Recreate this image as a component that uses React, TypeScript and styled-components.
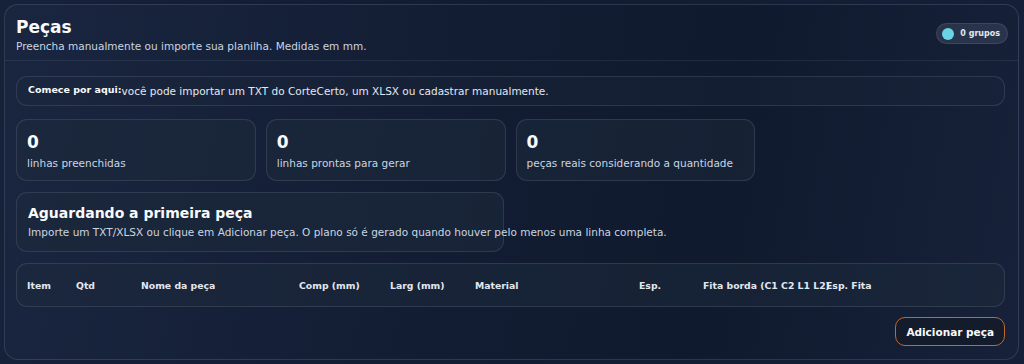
import React from "react";
import styled, { createGlobalStyle } from "styled-components";

const GlobalStyle = createGlobalStyle`
	html, body {
		margin: 0;
		padding: 0;
		background: #111a2e;
		font-family: "DejaVu Sans", "Liberation Sans", sans-serif;
		color: #e2e8f0;
	}
	* {
		box-sizing: border-box;
	}
`;

const Page = styled.div`
	width: 1024px;
	height: 364px;
	padding: 4px 5px 4px 4px;
	background: linear-gradient(90deg, #16213a 0%, #111b31 50%, #152038 100%);
`;

const Panel = styled.section`
	height: 356px;
	border: 1px solid rgba(148, 163, 184, 0.2);
	border-radius: 14px;
	background: linear-gradient(100deg, #1a2640 0%, #121d33 45%, #0f1a2e 70%, #17223a 100%);
	display: flex;
	flex-direction: column;
	overflow: hidden;
`;

const Header = styled.header`
	display: flex;
	justify-content: space-between;
	align-items: flex-start;
	padding: 11px 10px 6px 11px;
	border-bottom: 1px solid rgba(148, 163, 184, 0.12);
`;

const Title = styled.h1`
	margin: 0;
	font-size: 17px;
	line-height: 22px;
	font-weight: 700;
	color: #f8fafc;
`;

const Subtitle = styled.p`
	margin: 1px 0 0;
	font-size: 10.5px;
	line-height: 15px;
	color: #cbd5e1;
`;

const Badge = styled.div`
	margin-top: 7px;
	display: flex;
	align-items: center;
	gap: 6px;
	height: 21px;
	padding: 0 7px 0 5px;
	border-radius: 999px;
	background: rgba(148, 163, 184, 0.16);
	border: 1px solid rgba(148, 163, 184, 0.18);
	font-size: 8px;
	font-weight: 700;
	color: #e2e8f0;
`;

const Dot = styled.span`
	width: 12px;
	height: 12px;
	border-radius: 50%;
	background: #6ad3e6;
`;

const Body = styled.div`
	flex: 1;
	display: flex;
	flex-direction: column;
	padding: 15px 13px 0 11px;
`;

const Box = styled.div`
	border: 1px solid rgba(148, 163, 184, 0.18);
	border-radius: 11px;
	background: rgba(30, 41, 59, 0.35);
`;

const Callout = styled(Box)`
	height: 30px;
	display: flex;
	align-items: center;
	padding: 0 11px;
	font-size: 10.5px;
	color: #e2e8f0;
	white-space: nowrap;
`;

const CalloutLead = styled.strong`
	flex: 0 0 90px;
	font-size: 9.5px;
	font-weight: 700;
	color: #f8fafc;
	margin-top: -3px;
`;

const Stats = styled.div`
	margin-top: 13px;
	display: grid;
	grid-template-columns: repeat(4, 1fr);
	gap: 10px;
`;

const StatCard = styled(Box)`
	height: 62px;
	padding: 11px 10px 0;
	background: rgba(30, 41, 59, 0.55);
`;

const StatValue = styled.div`
	font-size: 17px;
	line-height: 22px;
	font-weight: 700;
	color: #f8fafc;
`;

const StatLabel = styled.div`
	margin-top: 3px;
	font-size: 10.5px;
	line-height: 15px;
	color: #cbd5e1;
`;

const Empty = styled(Box)`
	margin-top: 11px;
	width: 488px;
	height: 60px;
	padding: 10px 11px 0;
	background: rgba(30, 41, 59, 0.55);
	white-space: nowrap;
`;

const EmptyTitle = styled.div`
	font-size: 14px;
	line-height: 20px;
	font-weight: 700;
	color: #f8fafc;
`;

const EmptyText = styled.div`
	margin-top: 2px;
	font-size: 10.5px;
	line-height: 15px;
	color: #cbd5e1;
`;

const Table = styled(Box)`
	margin-top: 11px;
	height: 44px;
	display: grid;
	grid-template-columns: 49px 65px 158px 91px 85px 164px 64px 123px 1fr;
	align-items: center;
	padding: 0 10px;
	background: rgba(30, 41, 59, 0.5);
`;

const Th = styled.div`
	font-size: 9.3px;
	font-weight: 700;
	color: #e2e8f0;
	white-space: nowrap;
`;

const Actions = styled.div`
	margin-top: 10px;
	display: flex;
	justify-content: flex-end;
`;

const AddButton = styled.button`
	height: 29px;
	padding: 0 10px;
	border: 1.5px solid #c4672b;
	border-radius: 10px;
	background: #141b2b;
	color: #f8fafc;
	font-family: inherit;
	font-size: 10.5px;
	font-weight: 700;
	cursor: pointer;
`;

const columns = [
	"Item",
	"Qtd",
	"Nome da peça",
	"Comp (mm)",
	"Larg (mm)",
	"Material",
	"Esp.",
	"Fita borda (C1 C2 L1 L2)",
	"Esp. Fita",
];

const stats = [
	{ value: 0, label: "linhas preenchidas" },
	{ value: 0, label: "linhas prontas para gerar" },
	{ value: 0, label: "peças reais considerando a quantidade" },
];

export default function App() {
	return (
		<Page>
			<GlobalStyle />
			<Panel>
				<Header>
					<div>
						<Title>Peças</Title>
						<Subtitle>Preencha manualmente ou importe sua planilha. Medidas em mm.</Subtitle>
					</div>
					<Badge>
						<Dot />
						0 grupos
					</Badge>
				</Header>
				<Body>
					<Callout>
						<CalloutLead>Comece por aqui:</CalloutLead>
						você pode importar um TXT do CorteCerto, um XLSX ou cadastrar manualmente.
					</Callout>
					<Stats>
						{stats.map((s) => (
							<StatCard key={s.label}>
								<StatValue>{s.value}</StatValue>
								<StatLabel>{s.label}</StatLabel>
							</StatCard>
						))}
					</Stats>
					<Empty>
						<EmptyTitle>Aguardando a primeira peça</EmptyTitle>
						<EmptyText>
							Importe um TXT/XLSX ou clique em Adicionar peça. O plano só é gerado quando houver pelo menos uma linha completa.
						</EmptyText>
					</Empty>
					<Table>
						{columns.map((c) => (
							<Th key={c}>{c}</Th>
						))}
					</Table>
					<Actions>
						<AddButton>Adicionar peça</AddButton>
					</Actions>
				</Body>
			</Panel>
		</Page>
	);
}
